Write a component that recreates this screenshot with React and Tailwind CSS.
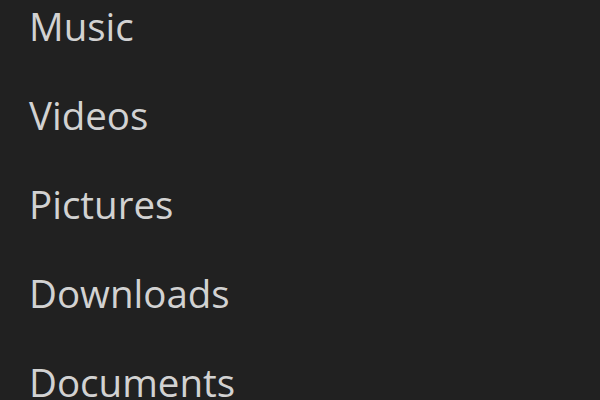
export default function App() {
  const items = ["Music", "Videos", "Pictures", "Downloads", "Documents"];
  return (
    <div className="w-[600px] h-[400px] overflow-hidden bg-[#212121]">
      <div className="flex flex-col pl-[29px] -mt-[18px]" style={{ fontFamily: '"Open Sans", sans-serif' }}>
        {items.map((t) => (
          <div key={t} className="text-[38.5px] leading-[89px] text-[#d2d2d2] whitespace-nowrap">
            {t}
          </div>
        ))}
      </div>
    </div>
  );
}
